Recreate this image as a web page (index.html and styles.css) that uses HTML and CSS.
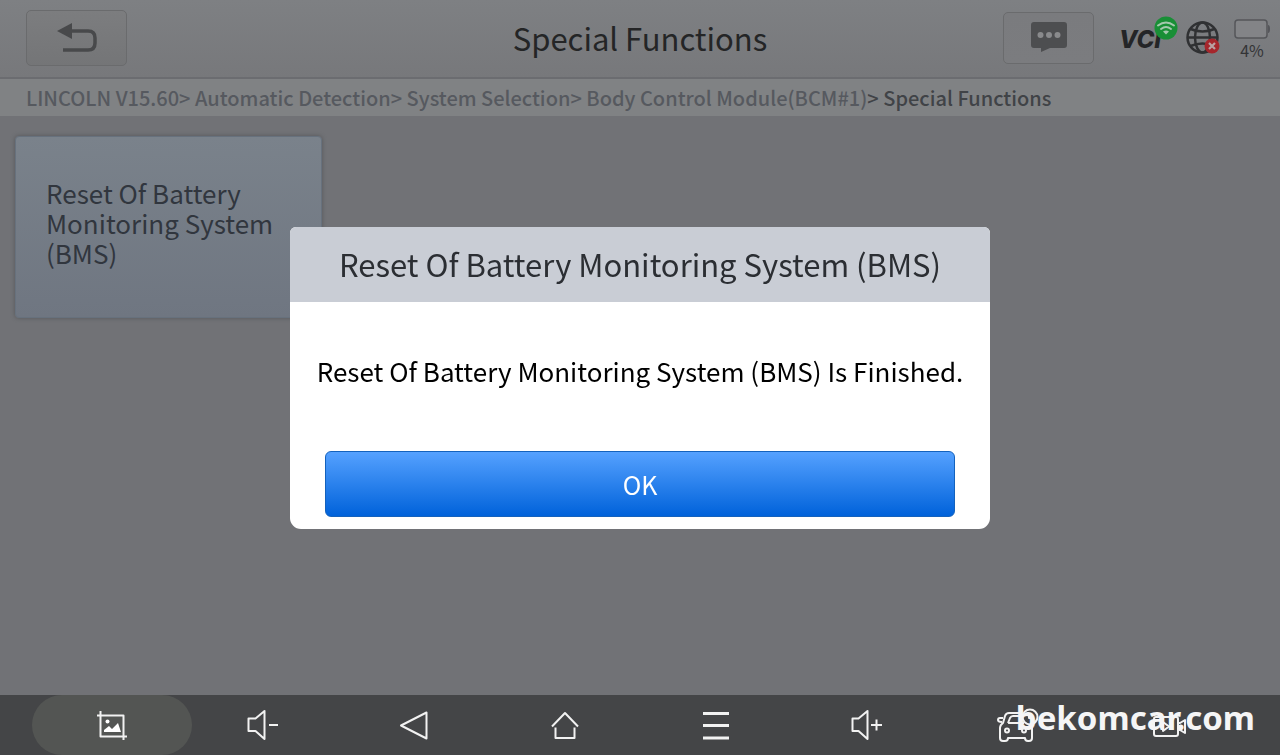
FILE: index.html
```html
<!DOCTYPE html>
<html lang="en">
<head>
<meta charset="utf-8">
<title>Special Functions</title>
<link rel="stylesheet" href="styles.css">
</head>
<body>
<div class="app">
  <header class="topbar">
    <div class="topbar-side">
      <button class="tool-button back-button" aria-label="Back">
        <svg width="42" height="32" viewBox="0 0 42 32"><path d="M1 9 16 1v16z" fill="#48494b"/><path d="M15 9h17q7 0 7 7v5q0 7-7 7H7" fill="none" stroke="#48494b" stroke-width="3.500"/></svg>
      </button>
    </div>
    <h1 class="title">Special Functions</h1>
    <div class="topbar-side status">
      <button class="tool-button chat-button" aria-label="Messages">
        <svg width="36" height="31" viewBox="0 0 36 31"><path d="M3 0h30q3 0 3 3v20q0 3-3 3H19L10 30V26H3q-3 0-3-3V3q0-3 3-3z" fill="#4d4e50"/><g fill="#898a8c"><circle cx="9.500" cy="13" r="3"/><circle cx="18" cy="13" r="3"/><circle cx="26.500" cy="13" r="3"/></g></svg>
      </button>
      <svg class="vci" width="60" height="40" viewBox="0 0 60 40" role="img" aria-label="VCI connected">
        <text x="1" y="32" class="vci-text">VCI</text>
        <circle cx="48" cy="12" r="11.500" fill="#198f36"/>
        <g fill="none" stroke="#a4c8ad" stroke-width="2" stroke-linecap="round"><path d="M40 9.500q8-6 16 0M43 13q5-4 10 0"/></g><path d="M45 15.500q3-2 6 0l-3 3z" fill="#a4c8ad"/>
      </svg>
      <svg class="globe" width="34" height="34" viewBox="0 0 34 34" role="img" aria-label="No network">
        <g fill="none" stroke="#303133" stroke-width="2.500"><circle cx="16.500" cy="16.500" r="15"/><ellipse cx="16.500" cy="16.500" rx="7.500" ry="15"/><path d="M1.500 16.500h30M4.500 8q12 5 24 0M4.500 25q12-5 24 0"/></g>
        <circle cx="26" cy="25" r="7.500" fill="#a5262c"/><path d="m23 22 6 6m0-6-6 6" stroke="#b9a0a2" stroke-width="2.200"/>
      </svg>
      <div class="battery">
        <svg width="36" height="21" viewBox="0 0 36 21" aria-hidden="true"><rect x="1" y="1" width="32" height="18" rx="3" fill="#838487" stroke="#55565a" stroke-width="1.500"/><path d="M34 6q2 0 2 4t-2 4z" fill="#55565a"/></svg>
        <span>4%</span>
      </div>
    </div>
  </header>

  <nav class="crumbs" aria-label="Breadcrumb">
    <a href="#">LINCOLN V15.60&gt;</a> <a href="#">Automatic Detection&gt;</a> <a href="#">System Selection&gt;</a> <a href="#">Body Control Module(BCM#1)</a><span>&gt; Special Functions</span>
  </nav>

  <main class="content">
    <button class="tile">Reset Of Battery Monitoring System (BMS)</button>
  </main>

  <nav class="navbar" aria-label="System">
    <button class="nav-item active" aria-label="Screenshot">
      <svg width="32" height="32" viewBox="0 0 32 32"><path d="M1 6.500h26.500V31M4.500 2v25.500H31" class="line"/><circle cx="11.500" cy="12.500" r="2" fill="#fff"/><path d="M8 23v-2l5-4 3 3 6-6 3 9z" fill="#fff"/></svg>
    </button>
    <button class="nav-item" aria-label="Volume down">
      <svg width="32" height="32" viewBox="0 0 32 32"><path d="M1.500 9.500h7l9-7.500v28l-9-8h-7zM22 16h9" class="line"/></svg>
    </button>
    <button class="nav-item" aria-label="Back">
      <svg width="32" height="32" viewBox="0 0 32 32"><path d="M28.500 3.500v26L3 16.500z" class="line"/></svg>
    </button>
    <button class="nav-item" aria-label="Home">
      <svg width="32" height="32" viewBox="0 0 32 32"><path d="M3 17.500 16 4l13 13.500M6.500 18.500V29h19V18.500" class="line"/></svg>
    </button>
    <button class="nav-item" aria-label="Menu">
      <svg width="32" height="32" viewBox="0 0 32 32"><path d="M3 4.500h26M3 16.500h26M3 29h26" class="line thick"/></svg>
    </button>
    <button class="nav-item" aria-label="Volume up">
      <svg width="32" height="32" viewBox="0 0 32 32"><path d="M1.500 9.500h6l9-7.500v28l-9-8h-6zM20 16h11M25.500 10.500v11" class="line"/></svg>
    </button>
    <button class="nav-item" aria-label="Vehicle">
      <svg width="42" height="36" viewBox="0 0 42 36"><path d="M25 6H12Q9 6 8 9L6 16q-3 2-3 5v10q0 3 3 3h2q3 0 3-3h17q0 3 3 3h1q3 0 3-3V19M11 16l2-5q1-2 3-2h9M11 16h16M6 11H3q-2 0-2 2t4 2" class="line"/><circle cx="10" cy="23.500" r="2" class="line"/><circle cx="27" cy="23.500" r="2" class="line"/><circle cx="33" cy="10" r="7.500" class="line"/><path d="M32 6v5h4" class="line"/></svg>
    </button>
    <button class="nav-item" aria-label="Record video">
      <svg width="34" height="32" viewBox="0 0 34 32"><rect x="2" y="8" width="24" height="19" rx="2" class="line"/><path d="M26 14h2l5-3v13l-5-3h-2M11 13l6 4.500-6 4.500z" class="line"/></svg>
    </button>
    <span class="watermark">bekomcar.com</span>
  </nav>
</div>

<div class="overlay">
  <section class="dialog" role="dialog" aria-modal="true" aria-labelledby="dialog-title">
    <h2 class="dialog-title" id="dialog-title">Reset Of Battery Monitoring System (BMS)</h2>
    <div class="dialog-body">
      <p class="dialog-text">Reset Of Battery Monitoring System (BMS) Is Finished.</p>
      <button class="ok">OK</button>
    </div>
  </section>
</div>
</body>
</html>
```
FILE: styles.css
```css
* { box-sizing: border-box; }

body {
  margin: 0;
  background: #717276;
  font-family: "Noto Sans CJK SC", "Noto Sans", sans-serif;
}

button {
  font-family: inherit;
  padding: 0;
}

svg { display: block; }

.app {
  min-height: 100vh;
  display: flex;
  flex-direction: column;
}

.topbar {
  display: grid;
  grid-template-columns: 1fr auto 1fr;
  align-items: center;
  height: 79px;
  padding: 0 10px 2px 26px;
  background: linear-gradient(#7e8083, #77787b);
  border-bottom: 2px solid #6b6c70;
}

.topbar-side { display: flex; align-items: center; }

.status { justify-content: flex-end; }

.title {
  margin: 0 16px 0 0;
  color: #242526;
  font-size: 31px;
  font-weight: 400;
  line-height: 48px;
}

.tool-button {
  display: grid;
  place-items: center;
  border: 1px solid #6a6b6d;
  border-radius: 5px;
}

.back-button {
  width: 101px;
  height: 56px;
  background: linear-gradient(#7c7d7f, #747577);
}

.chat-button {
  width: 91px;
  height: 52px;
  margin-right: 24px;
  background: linear-gradient(#7a7b7e, #7b7c7f);
}

.vci { margin: 0 8px 4px 0; }

.vci-text {
  fill: #242527;
  font-family: Inter, sans-serif;
  font-size: 24px;
  font-style: italic;
  font-weight: 800;
}

.globe { margin-right: 14px; }

.battery {
  display: flex;
  flex-direction: column;
  align-items: center;
  padding-top: 4px;
  color: #333436;
  font-size: 16px;
  line-height: 20px;
}

.crumbs {
  height: 37px;
  padding: 0 26px;
  background: #808284;
  color: #404347;
  font-size: 20px;
  font-weight: 500;
  line-height: 37px;
  white-space: nowrap;
}

.crumbs a {
  color: #56595f;
  text-decoration: none;
}

.content {
  flex: 1;
  padding: 20px 15px;
}

.tile {
  width: 307px;
  height: 182px;
  padding: 0 30px 8px;
  border: 1px solid #67717d;
  border-radius: 4px;
  background: linear-gradient(#7a828b, #6f7681);
  box-shadow: 0 0 4px #55565a;
  color: #31363e;
  font-size: 26px;
  line-height: 30px;
  text-align: left;
}

.navbar {
  position: relative;
  display: grid;
  grid-template-columns: repeat(8, minmax(0, 1fr));
  justify-items: center;
  height: 60px;
  padding: 0 36px;
  background: #444547;
}

.nav-item {
  display: grid;
  place-items: center;
  width: 160px;
  height: 60px;
  border: 0;
  border-radius: 30px;
  background: none;
}

.nav-item.active { background: #535553; }

.line {
  fill: none;
  stroke: #f2f2f2;
  stroke-width: 2;
  stroke-linejoin: round;
}

.line.thick { stroke-width: 3; }

.watermark {
  position: absolute;
  right: 25px;
  bottom: 17px;
  color: #f5f5f6;
  font-family: "Noto Sans", sans-serif;
  font-size: 33px;
  font-weight: 700;
  line-height: 40px;
}

.overlay {
  position: fixed;
  inset: 0;
  display: grid;
  place-items: center;
}

.dialog {
  width: 700px;
  max-width: 100%;
  overflow: hidden;
  border-radius: 6px 6px 11px 11px;
  background: #fff;
}

.dialog-title {
  margin: 0;
  padding: 13px 0 14px;
  background: #c9cdd5;
  color: #2b2e33;
  font-size: 31px;
  font-weight: 400;
  line-height: 48px;
  text-align: center;
}

.dialog-body { padding: 49px 0 12px; }

.dialog-text {
  margin: 0 0 60px;
  color: #000;
  font-size: 26px;
  line-height: 40px;
  text-align: center;
}

.ok {
  display: block;
  width: 90%;
  height: 66px;
  margin: 0 auto;
  border: 1px solid #1462bd;
  border-radius: 6px;
  background: linear-gradient(#55a1ff, #0062da);
  color: #fff;
  font-size: 25px;
  line-height: 40px;
}
```
